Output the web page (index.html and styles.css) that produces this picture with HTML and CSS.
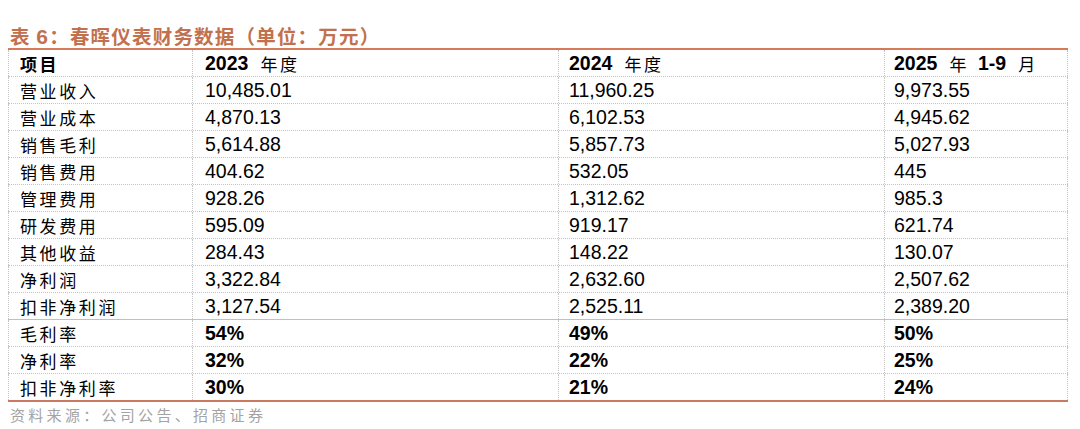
FILE: index.html
```html
<!DOCTYPE html>
<html lang="zh-CN">
<head>
<meta charset="utf-8">
<title>表 6：春晖仪表财务数据</title>
<link rel="stylesheet" href="styles.css">
</head>
<body>
<div class="page">
  <div class="title">表 <span class="num">6</span>：春晖仪表财务数据（单位：万元）</div>
  <div class="table">
    <div class="row head">
      <div class="cell label bold">项目</div>
      <div class="cell"><b class="n">2023</b><span class="cn">年度</span></div>
      <div class="cell"><b class="n">2024</b><span class="cn">年度</span></div>
      <div class="cell"><b class="n">2025</b><span class="cn">年</span><b class="n mid">1-9</b><span class="cn">月</span></div>
    </div>
    <div class="row"><div class="cell label">营业收入</div><div class="cell n">10,485.01</div><div class="cell n">11,960.25</div><div class="cell n">9,973.55</div></div>
    <div class="row"><div class="cell label">营业成本</div><div class="cell n">4,870.13</div><div class="cell n">6,102.53</div><div class="cell n">4,945.62</div></div>
    <div class="row"><div class="cell label">销售毛利</div><div class="cell n">5,614.88</div><div class="cell n">5,857.73</div><div class="cell n">5,027.93</div></div>
    <div class="row"><div class="cell label">销售费用</div><div class="cell n">404.62</div><div class="cell n">532.05</div><div class="cell n">445</div></div>
    <div class="row"><div class="cell label">管理费用</div><div class="cell n">928.26</div><div class="cell n">1,312.62</div><div class="cell n">985.3</div></div>
    <div class="row"><div class="cell label">研发费用</div><div class="cell n">595.09</div><div class="cell n">919.17</div><div class="cell n">621.74</div></div>
    <div class="row"><div class="cell label">其他收益</div><div class="cell n">284.43</div><div class="cell n">148.22</div><div class="cell n">130.07</div></div>
    <div class="row"><div class="cell label">净利润</div><div class="cell n">3,322.84</div><div class="cell n">2,632.60</div><div class="cell n">2,507.62</div></div>
    <div class="row sep"><div class="cell label">扣非净利润</div><div class="cell n">3,127.54</div><div class="cell n">2,525.11</div><div class="cell n">2,389.20</div></div>
    <div class="row"><div class="cell label">毛利率</div><div class="cell n bold">54%</div><div class="cell n bold">49%</div><div class="cell n bold">50%</div></div>
    <div class="row"><div class="cell label">净利率</div><div class="cell n bold">32%</div><div class="cell n bold">22%</div><div class="cell n bold">25%</div></div>
    <div class="row last"><div class="cell label">扣非净利率</div><div class="cell n bold">30%</div><div class="cell n bold">21%</div><div class="cell n bold">24%</div></div>
  </div>
  <div class="source">资料来源：公司公告、招商证券</div>
</div>
</body>
</html>
```

FILE: styles.css
```css
* { box-sizing: border-box; }
html, body { margin: 0; padding: 0; background: #ffffff; }
body {
  font-family: "Liberation Sans", "Noto Sans CJK SC", sans-serif;
  color: #000;
}
.page {
  width: 1080px;
  height: 429px;
  padding: 24px 0 0 8px;
}
.title {
  height: 24px;
  line-height: 24px;
  padding-left: 2px;
  font-family: "Noto Sans CJK SC", sans-serif;
  font-weight: 700;
  font-size: 19.5px;
  letter-spacing: 1.2px;
  color: #c2704d;
  white-space: nowrap;
}
.title .num {
  font-family: "Liberation Sans", sans-serif;
  font-weight: 700;
  font-size: 21px;
}
.table {
  width: 1060px;
  border-top: 2px solid #d77a5a;
}
.row {
  display: grid;
  grid-template-columns: 184px 366px 326px 184px;
  height: 27px;
  border-bottom: 1px dotted #c4c4c4;
}
.row.sep { border-bottom: 1px solid #eab29c; }
.row.last { height: 28px; border-bottom: 2px solid #c97a60; }
.cell {
  display: flex;
  align-items: center;
  padding-left: 12px;
  border-left: 1px dotted #c4c4c4;
  white-space: nowrap;
  font-size: 19.5px;
}
.cell:last-child { border-right: 1px dotted #c4c4c4; padding-left: 9px; }
.cell:nth-child(2) { padding-left: 12px; }
.cell:nth-child(3) { padding-left: 10px; }
.label {
  font-family: "Noto Sans CJK SC", sans-serif;
  font-size: 17px;
  letter-spacing: 2.6px;
  font-weight: 400;
  padding-left: 11px;
}
.label.bold { font-weight: 700; }
.n { font-family: "Liberation Sans", sans-serif; }
.bold { font-weight: 700; }
.cn {
  font-family: "Noto Sans CJK SC", sans-serif;
  font-size: 17px;
  letter-spacing: 2.6px;
  font-weight: 400;
  margin-left: 12px;
}
.n.mid { margin-left: 9px; }
.head .cell b { font-weight: 700; }
.source {
  margin-top: 4px;
  padding-left: 2px;
  font-family: "Noto Sans CJK SC", sans-serif;
  font-size: 15px;
  line-height: 18px;
  letter-spacing: 3.3px;
  color: #a3a3a3;
  white-space: nowrap;
}
```
